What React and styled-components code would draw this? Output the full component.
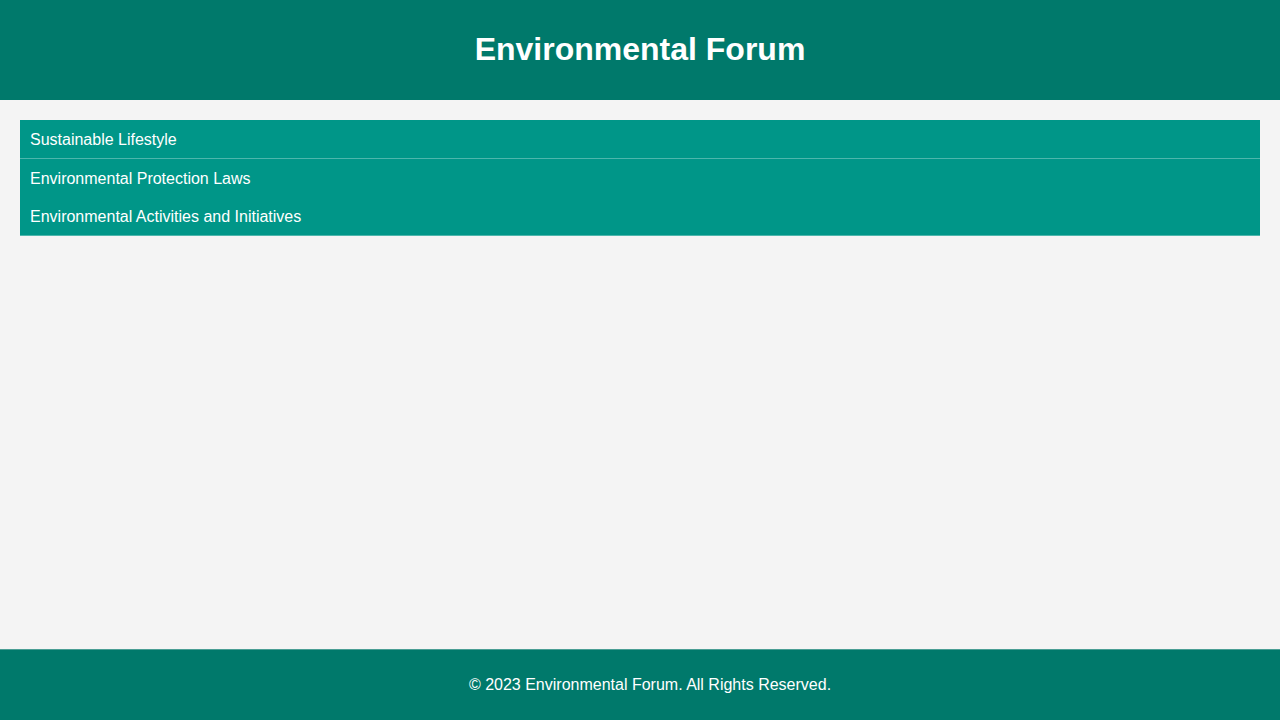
import React, { useState } from 'react';
import styled, { createGlobalStyle } from 'styled-components';

const GlobalStyle = createGlobalStyle`
  body {
    margin: 0;
    font-family: "Liberation Sans", Arial, sans-serif;
    background-color: #f4f4f4;
    color: #333;
  }
`;

const Header = styled.header`
  background-color: #00796b;
  color: white;
  height: 100px;
  display: flex;
  align-items: center;
  justify-content: center;
`;

const Title = styled.h1`
  margin: 0 0 2px;
  font-size: 32px;
  font-weight: bold;
`;

const Main = styled.main`
  padding: 20px;
`;

const TabList = styled.div`
  display: flex;
  flex-direction: column;
  background-color: #009688;
  border-bottom: 1px solid #4db6ac;
`;

const Tab = styled.div`
  padding: 11px 10px 9px;
  height: 18px;
  line-height: 18px;
  font-size: 16px;
  color: white;
  background-color: #009688;
  cursor: pointer;
  border-bottom: ${props => (props.divided ? '1px solid #4db6ac' : 'none')};

  &:hover {
    background-color: #00897b;
  }
`;

const Footer = styled.footer`
  position: fixed;
  bottom: 0;
  width: 100%;
  padding: 10px;
  background-color: #00796b;
  color: white;
  text-align: center;
  border-top: 1px solid #4a9e94;
`;

const FooterText = styled.p`
  margin: 16px 0;
  font-size: 16px;
  line-height: 18px;
`;

const topics = [
  'Sustainable Lifestyle',
  'Environmental Protection Laws',
  'Environmental Activities and Initiatives',
];

const App = () => {
  const [active, setActive] = useState(0);

  return (
    <>
      <GlobalStyle />
      <Header>
        <Title>Environmental Forum</Title>
      </Header>
      <Main>
        <TabList>
          {topics.map((topic, i) => (
            <Tab key={topic} divided={i === active} onClick={() => setActive(i)}>
              {topic}
            </Tab>
          ))}
        </TabList>
      </Main>
      <Footer>
        <FooterText>© 2023 Environmental Forum. All Rights Reserved.</FooterText>
      </Footer>
    </>
  );
};

export default App;
